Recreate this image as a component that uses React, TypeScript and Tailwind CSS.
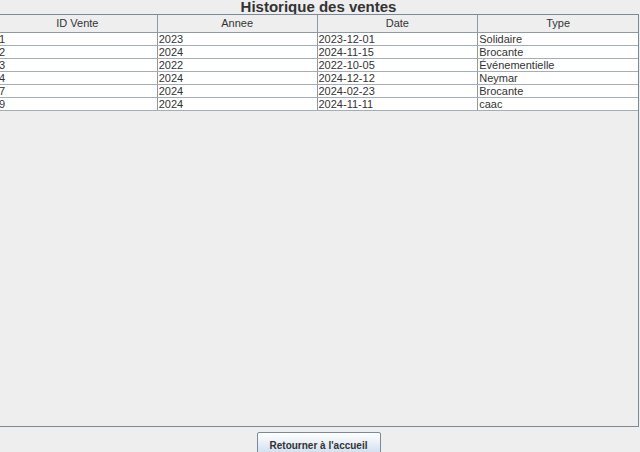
const rows = [
  ['1', '2023', '2023-12-01', 'Solidaire'],
  ['2', '2024', '2024-11-15', 'Brocante'],
  ['3', '2022', '2022-10-05', 'Événementielle'],
  ['4', '2024', '2024-12-12', 'Neymar'],
  ['7', '2024', '2024-02-23', 'Brocante'],
  ['9', '2024', '2024-11-11', 'caac'],
];

const headers = ['ID Vente', 'Annee', 'Date', 'Type'];
const widths = ['w-[160px]', 'w-[160px]', 'w-[161px]', 'w-[160px]'];

export default function App() {
  return (
    <div
      className="w-[640px] h-[452px] bg-[#eeeeee] flex flex-col overflow-hidden text-[#333333]"
      style={{ fontFamily: '"Liberation Sans", Arial, sans-serif' }}
    >
      <div className="h-[14px] w-[637px] shrink-0 flex items-center justify-center">
        <h1 className="text-[15px] leading-[14px] font-bold text-[#333333] -mt-[1px]">Historique des ventes</h1>
      </div>

      <div className="h-[413px] w-[642px] shrink-0 -ml-[3px] border border-[#7a8a99] bg-[#eeeeee] flex flex-col">
        <div className="flex h-[18px] border-b border-[#8e99a6] bg-[#eeeeee]">
          {headers.map((h, i) => (
            <div
              key={h}
              className={`${widths[i]} ${i < 3 ? 'border-r border-[#8e99a6]' : ''} flex items-center justify-center text-[11px] leading-none`}
            >
              {h}
            </div>
          ))}
        </div>
        {rows.map((r) => (
          <div key={r[0]} className="flex h-[13px] border-b border-[#a4adb8] bg-white">
            {r.map((c, i) => (
              <div
                key={i}
                className={`${widths[i]} ${i < 3 ? 'border-r border-[#8e99a6]' : ''} pl-[1px] flex items-center text-[11px] leading-none whitespace-nowrap`}
              >
                {c}
              </div>
            ))}
          </div>
        ))}
      </div>

      <div className="w-[637px] shrink-0 flex justify-center pt-[5px]">
        <button className="w-[124px] h-[26px] border border-[#7a8a99] rounded-[2px] bg-gradient-to-b from-white to-[#c9d9eb] text-[10px] font-bold text-[#333333] flex items-center justify-center">
          Retourner à l'accueil
        </button>
      </div>
    </div>
  );
}
